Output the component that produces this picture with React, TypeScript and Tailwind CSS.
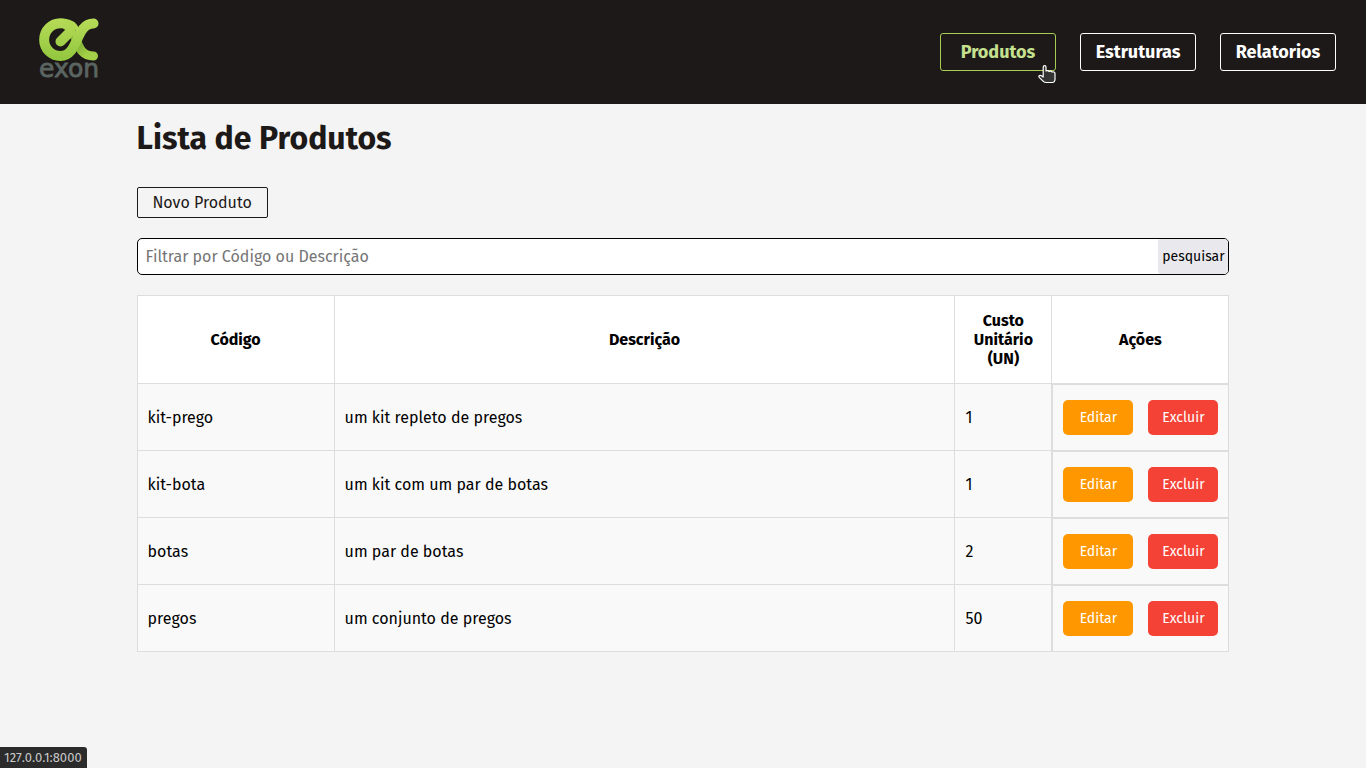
import React from "react";

type Product = { code: string; description: string; cost: number };

const products: Product[] = [
  { code: "kit-prego", description: "um kit repleto de pregos", cost: 1 },
  { code: "kit-bota", description: "um kit com um par de botas", cost: 1 },
  { code: "botas", description: "um par de botas", cost: 2 },
  { code: "pregos", description: "um conjunto de pregos", cost: 50 },
];

function Logo() {
  return (
    <svg viewBox="0 0 80 76" className="h-[76px] w-20" role="img" aria-label="exon">
      <defs>
        <linearGradient id="leaf" gradientUnits="userSpaceOnUse" x1="0" y1="8" x2="0" y2="52">
          <stop offset="0" stopColor="#b7dc58" />
          <stop offset="1" stopColor="#90c63d" />
        </linearGradient>
        <linearGradient id="fold" gradientUnits="userSpaceOnUse" x1="46" y1="32" x2="57" y2="44">
          <stop offset="0" stopColor="#78a832" />
          <stop offset="1" stopColor="#a2d047" />
        </linearGradient>
      </defs>
      <path
        d="M44 25C49 35 50 46 63.500 46"
        fill="none"
        stroke="url(#fold)"
        strokeWidth="9"
        strokeLinecap="round"
      />
      <path
        d="M30.500 31.500L40.500 21.500C41.500 17 36.500 13.300 30.500 13.300A16.300 16.300 0 0 0 30.500 46C49 46 45 13.500 63.500 13.500"
        fill="none"
        stroke="url(#leaf)"
        strokeWidth="10"
        strokeLinecap="round"
        strokeLinejoin="round"
      />
      <path d="M34 11C41 11 46 15 48 21" fill="none" stroke="#b2d953" strokeWidth="4" />
      <text x="39" y="67" textAnchor="middle" fill="#5a6562" stroke="#5a6562" strokeWidth="0.800" className="font-['DejaVu_Sans',sans-serif] text-[25px]">
        exon
      </text>
    </svg>
  );
}

function Pointer() {
  return (
    <svg viewBox="0 0 18 19" className="pointer-events-none absolute -right-px top-[31px] h-[19px] w-[18px]" aria-hidden="true">
      <path
        d="M5.200 11V2.200C5.200 .2 8 .2 8 2.200V6C9 5.500 10.500 5.500 11 6.500C12 5.800 13.500 6 14 7C15.500 6.500 17 7.200 17 8.500V14.500C17 16 15.800 17.500 14.500 17.500H8C6.500 17.500 5.500 16.800 4.500 15.700L1.200 12.300C.3 11 1.500 10 3 10.500L5.200 12Z"
        fill="#343434"
        stroke="#fff"
        strokeWidth="1.200"
        strokeLinejoin="round"
      />
    </svg>
  );
}

const navClass =
  "flex h-[38px] w-[116px] items-center justify-center rounded-[3px] border text-[18px] leading-6 font-bold";

export default function App() {
  return (
    <div className="flex min-h-screen flex-col bg-[#f4f4f4] font-['Fira_Sans','Noto_Sans',sans-serif] text-[16px] leading-[19px] text-black">
      <header className="flex h-[104px] items-center justify-between bg-[#1d1918] px-[30px]">
        <a href="#inicio" className="-mt-2">
          <Logo />
        </a>
        <nav className="flex gap-6">
          <a href="#produtos" className={`${navClass} relative border-[#a6ce55] text-[#c5e08f]`}>
            Produtos
            <Pointer />
          </a>
          <a href="#estruturas" className={`${navClass} border-white text-white`}>
            Estruturas
          </a>
          <a href="#relatorios" className={`${navClass} border-white text-white`}>
            Relatorios
          </a>
        </nav>
      </header>

      <main className="mx-auto w-4/5 pt-4">
        <h1 className="text-[32px] leading-9 font-bold text-[#1d1918]">Lista de Produtos</h1>
        <button
          type="button"
          className="mt-[31px] flex h-[31px] w-[131px] items-center justify-center rounded-[2px] border border-[#1d1918] text-[#1d1918]"
        >
          Novo Produto
        </button>

        <form
          className="mt-5 flex h-[37px] overflow-hidden rounded-[5px] border border-black bg-white"
          onSubmit={(event) => event.preventDefault()}
        >
          <input
            type="text"
            aria-label="Filtrar por Código ou Descrição"
            placeholder="Filtrar por Código ou Descrição"
            className="min-w-0 flex-1 px-2 outline-none placeholder:text-[#757575]"
          />
          <button type="submit" className="w-[70px] rounded-l-[3px] bg-[#e9e9ed] text-[14px]">
            pesquisar
          </button>
        </form>

        <table className="mt-5 w-full table-fixed border-collapse border border-[#dddddd] bg-[#f9f9f9]">
          <colgroup>
            <col className="w-[197px]" />
            <col />
            <col className="w-[97px]" />
            <col className="w-[177px]" />
          </colgroup>
          <thead className="bg-white">
            <tr className="h-[88px]">
              <th className="border border-[#dddddd] px-2.5">Código</th>
              <th className="border border-[#dddddd] px-2.5">Descrição</th>
              <th className="border border-[#dddddd] px-2.5">Custo Unitário (UN)</th>
              <th className="border border-[#dddddd] px-2.5">Ações</th>
            </tr>
          </thead>
          <tbody>
            {products.map((product) => (
              <tr key={product.code} className="h-[67px]">
                <td className="border border-[#dddddd] px-2.5">{product.code}</td>
                <td className="border border-[#dddddd] px-2.5">{product.description}</td>
                <td className="border border-[#dddddd] px-2.5">{product.cost}</td>
                <td className="border border-[#dddddd] p-0">
                  <div className="flex h-[66px] justify-between border-t border-l border-[#dddddd] px-2.5 pt-[15px] text-[14px] text-white">
                    <button type="button" className="h-[35px] w-[70px] rounded-[5px] bg-[#ff9800]">
                      Editar
                    </button>
                    <button type="button" className="h-[35px] w-[70px] rounded-[5px] bg-[#f44336]">
                      Excluir
                    </button>
                  </div>
                </td>
              </tr>
            ))}
          </tbody>
        </table>
      </main>

      <div className="fixed bottom-0 left-0 flex h-[21px] items-center rounded-tr-[3px] bg-[#2b2b2b] pr-[5px] pl-1 text-[13px] text-[#c8c8c8]">
        127.0.0.1:8000
      </div>
    </div>
  );
}
